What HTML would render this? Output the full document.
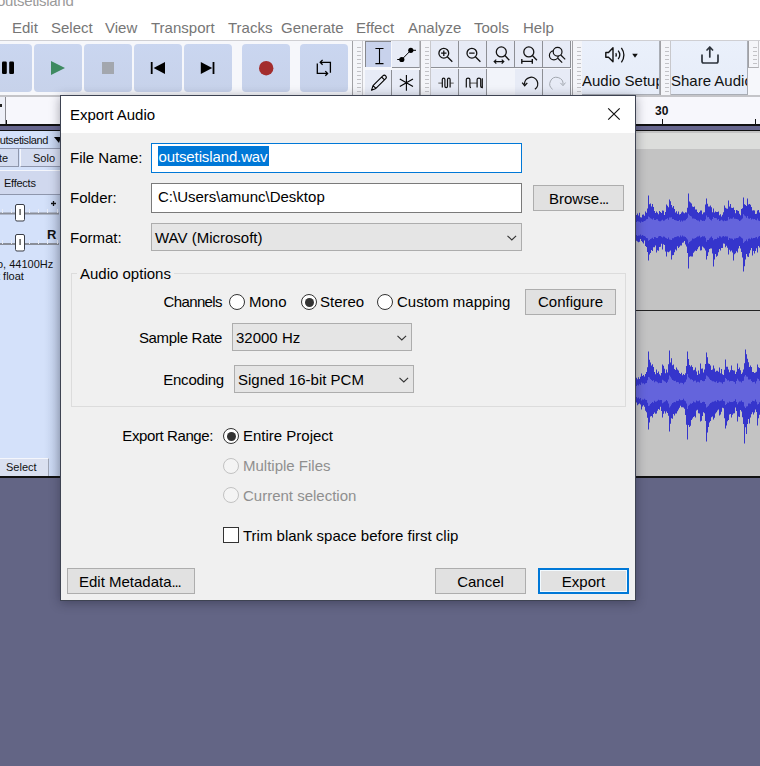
<!DOCTYPE html>
<html><head><meta charset="utf-8">
<style>
*{margin:0;padding:0;box-sizing:border-box}
html,body{width:760px;height:766px;overflow:hidden;background:#636585;font-family:"Liberation Sans",sans-serif;font-size:15px;color:#000}
.a{position:absolute}
svg{position:absolute;overflow:visible}
#top{left:0;top:0;width:760px;height:40px;background:#fff}
.menu{top:19px;color:#767676;font-size:15px;line-height:17px;white-space:nowrap}
#tb{left:0;top:40px;width:760px;height:57px;background:#f6f7fb;border-top:1px solid #cfcfd3;border-bottom:2px solid #c4c4c8}
.tbtn{top:44px;height:48px;background:linear-gradient(#cad6f0,#c7d2ea);border-radius:4px}
.grip{top:41px;height:54px;width:11px;border-left:1px solid #a0a0a4;border-right:1px solid #c8c8cc;background:#f4f5f9}
.grip i{position:absolute;left:4px;width:4px;height:1px;background:#c2c2c6}
.tl{background:#e7ebf6}
#ruler{left:0;top:97px;width:760px;height:27px;background:#f7f7fc}
.lbl{white-space:nowrap;line-height:17px}
.inp{background:#fff;border:1px solid #7a7a7a}
.btn{background:#e1e1e1;border:1px solid #adadad;text-align:center;line-height:24px;white-space:nowrap}
.combo{background:#e5e5e5;border:1px solid #adadad;line-height:26px;padding-left:4px;white-space:nowrap}
.radio{width:16px;height:16px;border-radius:50%;border:1px solid #333;background:#fff}
.tp{font-size:11px;line-height:13px;white-space:nowrap;color:#111}
</style></head><body>
<div id="top" class="a">
  <div class="a" style="left:-3px;top:-8px;color:#9a9a9a;font-size:15px;line-height:17px;letter-spacing:-0.3px">outsetisland</div>
  <div class="a menu" style="left:12px">Edit</div>
  <div class="a menu" style="left:51px">Select</div>
  <div class="a menu" style="left:105px">View</div>
  <div class="a menu" style="left:151px">Transport</div>
  <div class="a menu" style="left:228px">Tracks</div>
  <div class="a menu" style="left:281px">Generate</div>
  <div class="a menu" style="left:356px">Effect</div>
  <div class="a menu" style="left:408px">Analyze</div>
  <div class="a menu" style="left:474px">Tools</div>
  <div class="a menu" style="left:523px">Help</div>
</div>
<div id="tb" class="a"></div>
<!-- transport buttons -->
<div class="a tbtn" style="left:-16px;width:48px"></div>
<div class="a tbtn" style="left:34px;width:48px"></div>
<div class="a tbtn" style="left:84px;width:48px"></div>
<div class="a tbtn" style="left:134px;width:48px"></div>
<div class="a tbtn" style="left:184px;width:48px"></div>
<div class="a tbtn" style="left:242px;width:48px"></div>
<div class="a tbtn" style="left:300px;width:48px"></div>
<svg width="760" height="100" style="left:0;top:0">
  <rect x="2" y="61.5" width="4.8" height="12.5" rx="1.2" fill="#000"/>
  <rect x="9.2" y="61.5" width="4.8" height="12.5" rx="1.2" fill="#000"/>
  <path d="M51 61 L65 68 L51 75Z" fill="#3e8a61"/>
  <rect x="102" y="62" width="12" height="12" fill="#a3a7ae"/>
  <rect x="150.8" y="62" width="1.8" height="12" fill="#000"/>
  <path d="M165 62 L153.6 68 L165 74Z" fill="#000"/>
  <path d="M200.8 62 L212.2 68 L200.8 74Z" fill="#000"/>
  <rect x="212.6" y="62" width="1.8" height="12" fill="#000"/>
  <circle cx="266.2" cy="68.2" r="7.2" fill="#a32d2d"/>
  <path d="M322.6 59.9 L320.2 62.3 L322.6 64.7 M320.3 62.3 H330.4 V72.8 M317.3 63.5 V73.4 H327.6 M325.3 71.1 L327.6 73.4 L325.3 75.7" fill="none" stroke="#000" stroke-width="1.3"/>
</svg>
<!-- grips -->
<div class="a grip" style="left:352px"><i style="top:6px"></i><i style="top:10px"></i><i style="top:14px"></i><i style="top:18px"></i><i style="top:22px"></i><i style="top:26px"></i><i style="top:30px"></i><i style="top:34px"></i><i style="top:38px"></i><i style="top:42px"></i><i style="top:46px"></i><i style="top:50px"></i></div>
<div class="a grip" style="left:420px"><i style="top:6px"></i><i style="top:10px"></i><i style="top:14px"></i><i style="top:18px"></i><i style="top:22px"></i><i style="top:26px"></i><i style="top:30px"></i><i style="top:34px"></i><i style="top:38px"></i><i style="top:42px"></i><i style="top:46px"></i><i style="top:50px"></i></div>
<div class="a grip" style="left:572px"><i style="top:6px"></i><i style="top:10px"></i><i style="top:14px"></i><i style="top:18px"></i><i style="top:22px"></i><i style="top:26px"></i><i style="top:30px"></i><i style="top:34px"></i><i style="top:38px"></i><i style="top:42px"></i><i style="top:46px"></i><i style="top:50px"></i></div>
<div class="a grip" style="left:660px"><i style="top:6px"></i><i style="top:10px"></i><i style="top:14px"></i><i style="top:18px"></i><i style="top:22px"></i><i style="top:26px"></i><i style="top:30px"></i><i style="top:34px"></i><i style="top:38px"></i><i style="top:42px"></i><i style="top:46px"></i><i style="top:50px"></i></div>
<div class="a grip" style="left:748px;height:27px;border-bottom:1px solid #b0b0b4"><i style="top:6px"></i><i style="top:10px"></i><i style="top:14px"></i><i style="top:18px"></i><i style="top:22px"></i></div>
<!-- tools -->
<div class="a" style="left:365px;top:41px;width:26px;height:26px;background:#c8d2ec;border-top:1px solid #85878d;border-left:1px solid #85878d"></div>
<div class="a tl" style="left:392px;top:41px;width:28px;height:27px;border-bottom:1px solid #8d8f95;border-right:1px solid #c0c2c8"></div>
<div class="a tl" style="left:365px;top:70px;width:27px;height:25px;border-right:1px solid #8d8f95"></div>
<div class="a tl" style="left:392px;top:70px;width:28px;height:25px;border-right:1px solid #8d8f95"></div>
<svg width="760" height="100" style="left:0;top:0">
  <path d="M375.4 48.5 H383.5 M379.5 48.5 V63.6 M375.4 63.6 H383.5" stroke="#000" stroke-width="1.1" fill="none"/>
  <path d="M397.2 59.5 H401.8 L410.8 50.3 H416" stroke="#000" stroke-width="1" fill="none"/>
  <circle cx="401.8" cy="59.5" r="2.6" fill="#000"/><circle cx="410.8" cy="50.3" r="2.6" fill="#000"/>
  <path d="M371.5 90.3 L373 85.6 L382.8 75.8 Q384.3 74.4 385.7 75.8 Q387.1 77.2 385.7 78.6 L375.9 88.4 Z M373 85.6 L375.9 88.4 M381.6 77 L384.5 79.8" stroke="#000" stroke-width="1.1" fill="none" stroke-linejoin="round"/>
  <path d="M406.4 75 V90.8 M399.8 78.9 L413 86.5 M399.8 86.5 L413 78.9" stroke="#000" stroke-width="1.1" fill="none"/>
</svg>
<!-- zoom tools -->
<div class="a tl" style="left:431px;top:41px;width:28px;height:27px;border-right:1px solid #8d8f95;border-bottom:1px solid #8d8f95"></div>
<div class="a tl" style="left:459px;top:41px;width:28px;height:27px;border-right:1px solid #8d8f95;border-bottom:1px solid #8d8f95"></div>
<div class="a tl" style="left:487px;top:41px;width:28px;height:27px;border-right:1px solid #8d8f95;border-bottom:1px solid #8d8f95"></div>
<div class="a tl" style="left:515px;top:41px;width:28px;height:27px;border-right:1px solid #8d8f95;border-bottom:1px solid #8d8f95"></div>
<div class="a tl" style="left:543px;top:41px;width:28px;height:27px;border-right:1px solid #8d8f95;border-bottom:1px solid #8d8f95"></div>
<div class="a tl" style="left:431px;top:69px;width:28px;height:26px;border-right:1px solid #8d8f95"></div>
<div class="a tl" style="left:459px;top:69px;width:28px;height:26px;border-right:1px solid #8d8f95"></div>
<div class="a" style="left:487px;top:69px;width:28px;height:26px;background:#f2f4fa"></div>
<div class="a tl" style="left:515px;top:69px;width:28px;height:26px;border-right:1px solid #8d8f95"></div>
<div class="a tl" style="left:543px;top:69px;width:28px;height:26px;border-right:1px solid #8d8f95"></div>
<svg width="760" height="100" style="left:0;top:0">
  <g stroke="#111" stroke-width="1.3" fill="none">
    <circle cx="443.8" cy="53.2" r="4.9"/><path d="M447.3 56.7 L452.3 61.7 M441.1 53.2 H446.5 M443.8 50.5 V55.9"/>
    <circle cx="471.9" cy="53.2" r="4.9"/><path d="M475.4 56.7 L480.4 61.7 M469.2 53.2 H474.6"/>
    <circle cx="501.3" cy="51.9" r="5"/><path d="M504.9 55.5 L509.3 60.2"/>
    <path d="M494 61.6 H504 M496.3 59.6 L494.2 61.6 L496.3 63.6 M501.7 59.6 L503.8 61.6 L501.7 63.6" stroke-width="1.2"/>
    <circle cx="528.8" cy="51.9" r="5"/><path d="M532.4 55.5 L536.9 60.2"/>
    <path d="M521.5 61.4 H532.6 M521.8 59 V63.8 M532.3 59 V63.8" stroke-width="1.4"/>
    <circle cx="553.9" cy="55.3" r="4.5" stroke-width="1.2"/><circle cx="557.6" cy="51.7" r="4.4" fill="#e7ebf6" stroke-width="1.2"/><path d="M560.8 55 L565.2 59.4 M557.8 58.3 L562.2 62.6" stroke-width="1.2"/>
    <path d="M438.3 83.1 H442.3 M450.3 83.1 H453.7" stroke="#777" stroke-width="1.3"/>
    <path d="M442.3 87.6 V79.6 Q442.3 78.2 443.6 78.2 Q444.9 78.2 444.9 79.6 V86.3 Q444.9 87.6 446.2 87.6 Q447.5 87.6 447.5 86.3 V79.6 Q447.5 78.2 448.8 78.2 Q450.1 78.2 450.1 79.6 V87.6" stroke-width="1.2"/>
    <path d="M469.9 83.1 H477.1" stroke="#777" stroke-width="1.3"/>
    <path d="M466.3 87.6 V79.6 Q466.3 78.2 468.1 78.2 Q469.9 78.2 469.9 79.6 V86.3 Q469.9 87.6 471 87.6 M477.1 79.6 Q477.1 78.2 478.9 78.2 Q480.7 78.2 480.7 79.6 V86.3 Q480.7 87.6 482.3 87.6 V78.2 M477.1 79.6 V87.6" stroke-width="1.2"/>
    <path d="M534.9 89.3 A6.6 6.6 0 1 0 524.6 84.6" stroke-width="1.3"/>
    <path d="M522.2 82.6 L524.7 85.7 L527.3 82.9" stroke-width="1.3"/>
    <path d="M552.6 89.3 A6.6 6.6 0 1 1 563 84.6" stroke="#a3a8b0" stroke-width="1"/>
    <path d="M560.4 82.9 L563 85.7 L565.5 82.6" stroke="#a3a8b0" stroke-width="1"/>
  </g>
</svg>
<!-- audio setup / share -->
<div class="a" style="left:582px;top:41px;width:78px;height:54px;background:linear-gradient(#eaf0fb,#e6ecf8);border-right:1px solid #a9adb5;border-bottom:1px solid #a9adb5"></div>
<div class="a" style="left:671px;top:41px;width:77px;height:54px;background:linear-gradient(#eaf0fb,#e6ecf8);border-right:1px solid #a9adb5;border-bottom:1px solid #a9adb5"></div>
<div class="a lbl" style="left:582px;top:72px;width:77px;overflow:hidden;font-size:15px;color:#111">Audio Setup</div>
<div class="a lbl" style="left:671px;top:72px;width:76px;overflow:hidden;font-size:15px;color:#111">Share Audio</div>
<svg width="760" height="100" style="left:0;top:0">
  <path d="M605.8 52.5 H608.5 L613 47.8 V61.8 L608.5 57.3 H605.8 Z" stroke="#111" stroke-width="1.4" fill="none" stroke-linejoin="round"/>
  <path d="M615.8 53.2 Q616.8 54.9 615.8 56.6 M618.2 50.7 Q621.4 54.9 618.2 59.1 M621.4 47.8 Q626.4 54.9 621.4 62.4" stroke="#111" stroke-width="1.3" fill="none"/>
  <path d="M632.2 53.8 H637.8 L635 57.8Z" fill="#111"/>
  <path d="M709.8 57 V47.3 M707 50 L709.8 47 L712.6 50 M702 55.2 V61.3 Q702 63 703.7 63 H716.3 Q718 63 718 61.3 V55.2" stroke="#2d333c" stroke-width="1.7" fill="none" stroke-linecap="round" stroke-linejoin="round"/>
</svg>

<!-- ruler -->
<div id="ruler" class="a"></div>
<div class="a" style="left:0;top:97px;width:6px;height:27px;background:#eef0f8;border-right:1px solid #8a8a90"></div>
<div class="a" style="left:0;top:104px;width:2px;height:3px;background:#222"></div>
<div class="a" style="left:6px;top:120px;width:1px;height:4px;background:#111"></div>
<div class="a tp" style="left:655px;top:104px;font-size:12px;font-weight:bold;line-height:14px">30</div>
<div class="a" style="left:662px;top:119px;width:1px;height:5px;background:#111"></div>
<div class="a" style="left:755px;top:119px;width:1px;height:5px;background:#111"></div>
<!-- top dark band -->
<div class="a" style="left:0;top:124px;width:760px;height:7px;background:#66668e;border-top:2px solid #111;border-bottom:1px solid #111"></div>
<div class="a" style="left:636px;top:131px;width:124px;height:1px;background:#e6e6e6"></div>
<div class="a" style="left:636px;top:132px;width:124px;height:1px;background:#111"></div>

<!-- track panel -->
<div class="a" style="left:0;top:131px;width:61px;height:345px;background:linear-gradient(90deg,#d4e1fa 0,#d4e1fa 72%,#bccae4 100%)"></div>
<div class="a tp" style="left:-6px;top:134px;font-size:11px;letter-spacing:-0.4px">outsetisland</div>
<svg width="70" height="200" style="left:0;top:0"><path d="M54 137 H61 L59 143Z" fill="#000"/></svg>
<div class="a" style="left:0;top:148px;width:61px;height:1px;background:#8e96ac"></div>
<div class="a" style="left:-20px;top:149px;width:39px;height:18px;background:#d4dcf0;border-right:1px solid #8e96ac;border-bottom:1px solid #8e96ac"></div>
<div class="a tp" style="left:-1px;top:152px">te</div>
<div class="a" style="left:20px;top:149px;width:41px;height:18px;background:#d4dcf0;border-bottom:1px solid #8e96ac;border-left:1px solid #f4f6fc"></div>
<div class="a tp" style="left:33px;top:152px">Solo</div>
<div class="a" style="left:0;top:170px;width:61px;height:1px;background:#f4f6fc"></div>
<div class="a" style="left:0;top:171px;width:61px;height:24px;background:#d0d8ee;border-bottom:1px solid #8e96ac"></div>
<div class="a tp" style="left:4px;top:177px;letter-spacing:-0.25px">Effects</div>
<!-- gain slider -->
<svg width="70" height="300" style="left:0;top:0">
  <rect x="0" y="212.5" width="59" height="2" fill="#8a8e98"/>
  <g fill="#e8ecf6"><rect x="2" y="209" width="1" height="4"/><rect x="11" y="209" width="1" height="4"/><rect x="29" y="209" width="1" height="4"/><rect x="38" y="209" width="1" height="4"/><rect x="47" y="209" width="1" height="4"/><rect x="57" y="209" width="1" height="4"/></g>
  <rect x="15.5" y="204.5" width="9" height="16.5" rx="1.5" fill="#fff" stroke="#3a3e48" stroke-width="1"/>
  <rect x="19.3" y="209" width="1.6" height="6" fill="#666"/>
  <path d="M51 203.5 H56 M53.5 201 V206" stroke="#111" stroke-width="1.3"/>
  <rect x="0" y="243" width="59" height="2" fill="#8a8e98"/>
  <g fill="#e8ecf6"><rect x="2" y="240" width="1" height="4"/><rect x="11" y="240" width="1" height="4"/><rect x="29" y="240" width="1" height="4"/><rect x="38" y="240" width="1" height="4"/><rect x="47" y="240" width="1" height="4"/><rect x="57" y="240" width="1" height="4"/></g>
  <rect x="15.5" y="234.5" width="9" height="16.5" rx="1.5" fill="#fff" stroke="#3a3e48" stroke-width="1"/>
  <rect x="19.3" y="239" width="1.6" height="6" fill="#666"/>
</svg>
<div class="a tp" style="left:47px;top:228px;font-size:13px;font-weight:bold;line-height:13px">R</div>
<div class="a tp" style="left:-3px;top:258px">o, 44100Hz</div>
<div class="a tp" style="left:-3px;top:270px">t float</div>
<div class="a" style="left:-10px;top:458px;width:59px;height:18px;background:#dae0f0;border-right:1px solid #9ea4b4;border-top:1px solid #f4f6fc"></div>
<div class="a tp" style="left:6px;top:461px">Select</div>

<!-- waveform area -->
<div class="a" style="left:636px;top:131px;width:124px;height:345px;background:#c3c3c3"></div>
<div class="a" style="left:636px;top:133px;width:124px;height:16px;background:#dcdddb"></div>
<div class="a" style="left:636px;top:310px;width:124px;height:1px;background:#222"></div>
<svg width="760" height="766" style="left:0;top:0"><path d="M636 214.9L637 214.9L637 213.6L638 213.6L638 215.6L639 215.6L639 212.8L640 212.8L640 217.3L641 217.3L641 217.4L642 217.4L642 214.7L643 214.7L643 214.6L644 214.6L644 215.8L645 215.8L645 211.6L646 211.6L646 212.8L647 212.8L647 208.5L648 208.5L648 195.6L649 195.6L649 204.3L650 204.3L650 203.4L651 203.4L651 206.4L652 206.4L652 204.0L653 204.0L653 206.9L654 206.9L654 211.1L655 211.1L655 213.0L656 213.0L656 211.6L657 211.6L657 212.8L658 212.8L658 214.3L659 214.3L659 210.9L660 210.9L660 211.9L661 211.9L661 212.9L662 212.9L662 210.6L663 210.6L663 210.7L664 210.7L664 214.9L665 214.9L665 212.0L666 212.0L666 204.6L667 204.6L667 205.8L668 205.8L668 207.2L669 207.2L669 199.6L670 199.6L670 201.2L671 201.2L671 205.0L672 205.0L672 207.6L673 207.6L673 206.1L674 206.1L674 208.9L675 208.9L675 212.4L676 212.4L676 211.2L677 211.2L677 213.8L678 213.8L678 211.6L679 211.6L679 214.5L680 214.5L680 213.9L681 213.9L681 212.6L682 212.6L682 211.6L683 211.6L683 212.6L684 212.6L684 213.3L685 213.3L685 212.3L686 212.3L686 212.6L687 212.6L687 207.8L688 207.8L688 193.6L689 193.6L689 201.5L690 201.5L690 202.6L691 202.6L691 203.6L692 203.6L692 206.4L693 206.4L693 207.0L694 207.0L694 206.4L695 206.4L695 209.4L696 209.4L696 209.4L697 209.4L697 211.9L698 211.9L698 213.0L699 213.0L699 211.9L700 211.9L700 210.6L701 210.6L701 210.5L702 210.5L702 214.2L703 214.2L703 212.5L704 212.5L704 212.2L705 212.2L705 204.6L706 204.6L706 198.6L707 198.6L707 203.8L708 203.8L708 206.6L709 206.6L709 206.6L710 206.6L710 205.6L711 205.6L711 207.2L712 207.2L712 212.2L713 212.2L713 208.6L714 208.6L714 212.6L715 212.6L715 211.6L716 211.6L716 212.0L717 212.0L717 212.1L718 212.1L718 211.6L719 211.6L719 215.3L720 215.3L720 214.3L721 214.3L721 216.5L722 216.5L722 214.7L723 214.7L723 212.3L724 212.3L724 205.6L725 205.6L725 207.8L726 207.8L726 208.6L727 208.6L727 208.7L728 208.7L728 200.6L729 200.6L729 206.6L730 206.6L730 203.9L731 203.9L731 207.8L732 207.8L732 207.9L733 207.9L733 207.6L734 207.6L734 210.0L735 210.0L735 213.2L736 213.2L736 210.1L737 210.1L737 210.6L738 210.6L738 210.9L739 210.9L739 213.7L740 213.7L740 215.3L741 215.3L741 209.0L742 209.0L742 208.2L743 208.2L743 197.6L744 197.6L744 204.2L745 204.2L745 204.9L746 204.9L746 206.1L747 206.1L747 198.6L748 198.6L748 204.4L749 204.4L749 204.1L750 204.1L750 204.8L751 204.8L751 206.9L752 206.9L752 210.6L753 210.6L753 210.2L754 210.2L754 210.6L755 210.6L755 214.1L756 214.1L756 213.8L757 213.8L757 210.6L758 210.6L758 210.0L759 210.0L759 212.4L760 212.4L760 213.0L761 213.0L761 247.8L760 247.8L760 247.4L759 247.4L759 246.1L758 246.1L758 252.6L757 252.6L757 248.3L756 248.3L756 251.0L755 251.0L755 253.5L754 253.5L754 251.1L753 251.1L753 255.6L752 255.6L752 248.1L751 248.1L751 250.3L750 250.3L750 253.3L749 253.3L749 256.9L748 256.9L748 256.6L747 256.6L747 254.1L746 254.1L746 259.5L745 259.5L745 266.2L744 266.2L744 271.6L743 271.6L743 257.5L742 257.5L742 251.9L741 251.9L741 248.4L740 248.4L740 245.9L739 245.9L739 248.5L738 248.5L738 252.6L737 252.6L737 251.3L736 251.3L736 253.2L735 253.2L735 254.3L734 254.3L734 260.6L733 260.6L733 252.5L732 252.5L732 250.4L731 250.4L731 251.6L730 251.6L730 249.8L729 249.8L729 254.6L728 254.6L728 247.8L727 247.8L727 245.8L726 245.8L726 247.2L725 247.2L725 243.8L724 243.8L724 243.5L723 243.5L723 248.0L722 248.0L722 248.0L721 248.0L721 250.6L720 250.6L720 249.1L719 249.1L719 252.3L718 252.3L718 255.7L717 255.7L717 256.8L716 256.8L716 253.9L715 253.9L715 259.6L714 259.6L714 266.6L713 266.6L713 253.4L712 253.4L712 248.6L711 248.6L711 248.6L710 248.6L710 249.1L709 249.1L709 252.3L708 252.3L708 256.1L707 256.1L707 259.6L706 259.6L706 250.4L705 250.4L705 248.5L704 248.5L704 247.6L703 247.6L703 246.4L702 246.4L702 250.3L701 250.3L701 250.6L700 250.6L700 246.2L699 246.2L699 247.2L698 247.2L698 249.2L697 249.2L697 251.0L696 251.0L696 250.4L695 250.4L695 251.4L694 251.4L694 252.7L693 252.7L693 256.4L692 256.4L692 256.5L691 256.5L691 256.3L690 256.3L690 256.8L689 256.8L689 268.6L688 268.6L688 253.0L687 253.0L687 246.4L686 246.4L686 244.6L685 244.6L685 240.9L684 240.9L684 242.5L683 242.5L683 242.7L682 242.7L682 245.6L681 245.6L681 245.6L680 245.6L680 246.8L679 246.8L679 247.9L678 247.9L678 246.2L677 246.2L677 250.4L676 250.4L676 249.6L675 249.6L675 252.2L674 252.2L674 255.0L673 255.0L673 255.3L672 255.3L672 259.6L671 259.6L671 250.4L670 250.4L670 251.4L669 251.4L669 252.3L668 252.3L668 251.8L667 251.8L667 256.6L666 256.6L666 251.6L665 251.6L665 245.1L664 245.1L664 244.3L663 244.3L663 249.6L662 249.6L662 243.7L661 243.7L661 246.7L660 246.7L660 246.9L659 246.9L659 250.7L658 250.7L658 250.2L657 250.2L657 252.6L656 252.6L656 245.6L655 245.6L655 247.3L654 247.3L654 247.2L653 247.2L653 251.1L652 251.1L652 249.9L651 249.9L651 253.0L650 253.0L650 254.5L649 254.5L649 260.6L648 260.6L648 252.1L647 252.1L647 247.0L646 247.0L646 246.0L645 246.0L645 240.6L644 240.6L644 243.6L643 243.6L643 242.2L642 242.2L642 240.9L641 240.9L641 239.1L640 239.1L640 241.7L639 241.7L639 242.3L638 242.3L638 241.5L637 241.5L637 240.7L636 240.7Z" fill="#3535cc"/><path d="M636 222.1L637 222.1L637 221.3L638 221.3L638 221.6L639 221.6L639 221.8L640 221.8L640 222.7L641 222.7L641 221.4L642 221.4L642 222.1L643 222.1L643 221.5L644 221.5L644 221.1L645 221.1L645 220.4L646 220.4L646 219.2L647 219.2L647 219.0L648 219.0L648 216.5L649 216.5L649 217.3L650 217.3L650 218.2L651 218.2L651 218.7L652 218.7L652 219.4L653 219.4L653 218.3L654 218.3L654 220.1L655 220.1L655 219.9L656 219.9L656 219.3L657 219.3L657 219.2L658 219.2L658 220.8L659 220.8L659 221.3L660 221.3L660 221.3L661 221.3L661 220.5L662 220.5L662 219.8L663 219.8L663 220.8L664 220.8L664 220.5L665 220.5L665 219.5L666 219.5L666 218.9L667 218.9L667 218.3L668 218.3L668 219.8L669 219.8L669 217.6L670 217.6L670 217.5L671 217.5L671 217.2L672 217.2L672 218.9L673 218.9L673 218.9L674 218.9L674 220.0L675 220.0L675 220.2L676 220.2L676 220.5L677 220.5L677 221.0L678 221.0L678 221.0L679 221.0L679 220.0L680 220.0L680 221.8L681 221.8L681 220.4L682 220.4L682 221.6L683 221.6L683 220.6L684 220.6L684 220.6L685 220.6L685 220.2L686 220.2L686 219.0L687 219.0L687 217.7L688 217.7L688 213.7L689 213.7L689 215.3L690 215.3L690 215.9L691 215.9L691 216.6L692 216.6L692 218.6L693 218.6L693 218.4L694 218.4L694 218.8L695 218.8L695 219.1L696 219.1L696 219.9L697 219.9L697 220.6L698 220.6L698 220.6L699 220.6L699 221.4L700 221.4L700 219.8L701 219.8L701 220.2L702 220.2L702 221.0L703 221.0L703 220.7L704 220.7L704 221.0L705 221.0L705 219.5L706 219.5L706 215.5L707 215.5L707 217.3L708 217.3L708 217.1L709 217.1L709 218.7L710 218.7L710 219.8L711 219.8L711 220.6L712 220.6L712 219.1L713 219.1L713 216.9L714 216.9L714 217.9L715 217.9L715 218.1L716 218.1L716 218.2L717 218.2L717 219.8L718 219.8L718 219.1L719 219.1L719 221.0L720 221.0L720 220.6L721 220.6L721 219.8L722 219.8L722 220.6L723 220.6L723 221.3L724 221.3L724 220.4L725 220.4L725 220.9L726 220.9L726 220.7L727 220.7L727 220.6L728 220.6L728 217.1L729 217.1L729 219.2L730 219.2L730 218.6L731 218.6L731 218.7L732 218.7L732 218.5L733 218.5L733 217.2L734 217.2L734 218.7L735 218.7L735 218.7L736 218.7L736 219.1L737 219.1L737 219.3L738 219.3L738 219.7L739 219.7L739 220.9L740 220.9L740 220.5L741 220.5L741 219.4L742 219.4L742 218.6L743 218.6L743 214.3L744 214.3L744 215.4L745 215.4L745 216.3L746 216.3L746 217.8L747 217.8L747 215.9L748 215.9L748 218.4L749 218.4L749 218.7L750 218.7L750 217.9L751 217.9L751 219.4L752 219.4L752 218.7L753 218.7L753 219.3L754 219.3L754 219.1L755 219.1L755 219.7L756 219.7L756 220.2L757 220.2L757 218.6L758 218.6L758 220.4L759 220.4L759 221.1L760 221.1L760 220.8L761 220.8L761 236.4L760 236.4L760 236.1L759 236.1L759 236.8L758 236.8L758 238.6L757 238.6L757 237.0L756 237.0L756 237.5L755 237.5L755 238.1L754 238.1L754 237.9L753 237.9L753 238.5L752 238.5L752 237.8L751 237.8L751 239.3L750 239.3L750 238.5L749 238.5L749 238.8L748 238.8L748 241.3L747 241.3L747 239.4L746 239.4L746 240.9L745 240.9L745 241.8L744 241.8L744 242.9L743 242.9L743 238.6L742 238.6L742 237.8L741 237.8L741 236.7L740 236.7L740 236.3L739 236.3L739 237.5L738 237.5L738 237.9L737 237.9L737 238.1L736 238.1L736 238.5L735 238.5L735 238.5L734 238.5L734 240.0L733 240.0L733 238.7L732 238.7L732 238.5L731 238.5L731 238.6L730 238.6L730 238.0L729 238.0L729 240.1L728 240.1L728 236.6L727 236.6L727 236.5L726 236.5L726 236.3L725 236.3L725 236.8L724 236.8L724 235.9L723 235.9L723 236.6L722 236.6L722 237.4L721 237.4L721 236.6L720 236.6L720 236.2L719 236.2L719 238.1L718 238.1L718 237.4L717 237.4L717 239.0L716 239.0L716 239.1L715 239.1L715 239.3L714 239.3L714 240.3L713 240.3L713 238.1L712 238.1L712 236.6L711 236.6L711 237.4L710 237.4L710 238.5L709 238.5L709 240.1L708 240.1L708 239.9L707 239.9L707 241.7L706 241.7L706 237.7L705 237.7L705 236.2L704 236.2L704 236.5L703 236.5L703 236.2L702 236.2L702 237.0L701 237.0L701 237.4L700 237.4L700 235.8L699 235.8L699 236.6L698 236.6L698 236.6L697 236.6L697 237.3L696 237.3L696 238.1L695 238.1L695 238.4L694 238.4L694 238.8L693 238.8L693 238.6L692 238.6L692 240.6L691 240.6L691 241.3L690 241.3L690 241.9L689 241.9L689 243.5L688 243.5L688 239.5L687 239.5L687 238.2L686 238.2L686 237.0L685 237.0L685 236.6L684 236.6L684 236.6L683 236.6L683 235.6L682 235.6L682 236.8L681 236.8L681 235.4L680 235.4L680 237.2L679 237.2L679 236.2L678 236.2L678 236.2L677 236.2L677 236.7L676 236.7L676 237.0L675 237.0L675 237.2L674 237.2L674 238.3L673 238.3L673 238.3L672 238.3L672 240.0L671 240.0L671 239.7L670 239.7L670 239.6L669 239.6L669 237.4L668 237.4L668 238.9L667 238.9L667 238.3L666 238.3L666 237.7L665 237.7L665 236.7L664 236.7L664 236.4L663 236.4L663 237.4L662 237.4L662 236.7L661 236.7L661 235.9L660 235.9L660 235.9L659 235.9L659 236.4L658 236.4L658 238.0L657 238.0L657 237.9L656 237.9L656 237.3L655 237.3L655 237.1L654 237.1L654 238.9L653 238.9L653 237.8L652 237.8L652 238.5L651 238.5L651 239.0L650 239.0L650 239.9L649 239.9L649 240.7L648 240.7L648 238.2L647 238.2L647 238.0L646 238.0L646 236.8L645 236.8L645 236.1L644 236.1L644 235.7L643 235.7L643 235.1L642 235.1L642 235.8L641 235.8L641 234.5L640 234.5L640 235.4L639 235.4L639 235.6L638 235.6L638 235.9L637 235.9L637 235.1L636 235.1Z" fill="#6464dc"/>
<path d="M636 377.8L637 377.8L637 379.3L638 379.3L638 377.2L639 377.2L639 379.1L640 379.1L640 376.8L641 376.8L641 373.5L642 373.5L642 375.9L643 375.9L643 375.0L644 375.0L644 376.5L645 376.5L645 374.0L646 374.0L646 372.1L647 372.1L647 367.2L648 367.2L648 351.5L649 351.5L649 359.8L650 359.8L650 362.6L651 362.6L651 365.5L652 365.5L652 364.2L653 364.2L653 367.1L654 367.1L654 372.0L655 372.0L655 374.2L656 374.2L656 369.5L657 369.5L657 373.0L658 373.0L658 371.5L659 371.5L659 374.3L660 374.3L660 375.6L661 375.6L661 373.1L662 373.1L662 364.5L663 364.5L663 365.7L664 365.7L664 368.7L665 368.7L665 373.2L666 373.2L666 369.6L667 369.6L667 372.5L668 372.5L668 364.2L669 364.2L669 350.5L670 350.5L670 362.4L671 362.4L671 358.2L672 358.2L672 365.3L673 365.3L673 364.5L674 364.5L674 369.0L675 369.0L675 370.1L676 370.1L676 367.5L677 367.5L677 369.4L678 369.4L678 370.5L679 370.5L679 373.1L680 373.1L680 373.9L681 373.9L681 372.7L682 372.7L682 375.3L683 375.3L683 374.1L684 374.1L684 375.0L685 375.0L685 373.3L686 373.3L686 365.9L687 365.9L687 351.5L688 351.5L688 359.0L689 359.0L689 365.0L690 365.0L690 366.5L691 366.5L691 365.3L692 365.3L692 366.9L693 366.9L693 370.2L694 370.2L694 369.8L695 369.8L695 367.5L696 367.5L696 371.4L697 371.4L697 375.0L698 375.0L698 370.5L699 370.5L699 373.7L700 373.7L700 363.5L701 363.5L701 368.7L702 368.7L702 368.5L703 368.5L703 372.4L704 372.4L704 369.5L705 369.5L705 363.9L706 363.9L706 352.5L707 352.5L707 357.3L708 357.3L708 363.4L709 363.4L709 363.9L710 363.9L710 365.5L711 365.5L711 370.1L712 370.1L712 369.5L713 369.5L713 365.5L714 365.5L714 368.5L715 368.5L715 371.7L716 371.7L716 370.8L717 370.8L717 370.8L718 370.8L718 371.8L719 371.8L719 367.5L720 367.5L720 373.3L721 373.3L721 368.9L722 368.9L722 374.2L723 374.2L723 374.9L724 374.9L724 369.8L725 369.8L725 359.5L726 359.5L726 366.7L727 366.7L727 366.7L728 366.7L728 369.5L729 369.5L729 372.3L730 372.3L730 370.3L731 370.3L731 365.5L732 365.5L732 370.1L733 370.1L733 370.5L734 370.5L734 370.4L735 370.4L735 373.9L736 373.9L736 371.8L737 371.8L737 363.5L738 363.5L738 369.1L739 369.1L739 367.5L740 367.5L740 370.2L741 370.2L741 373.9L742 373.9L742 372.5L743 372.5L743 369.4L744 369.4L744 363.3L745 363.3L745 349.5L746 349.5L746 354.3L747 354.3L747 358.8L748 358.8L748 362.3L749 362.3L749 367.1L750 367.1L750 365.5L751 365.5L751 366.9L752 366.9L752 372.0L753 372.0L753 371.9L754 371.9L754 373.1L755 373.1L755 372.5L756 372.5L756 371.8L757 371.8L757 364.5L758 364.5L758 367.2L759 367.2L759 368.1L760 368.1L760 370.2L761 370.2L761 412.6L760 412.6L760 414.8L759 414.8L759 418.3L758 418.3L758 425.5L757 425.5L757 412.0L756 412.0L756 409.5L755 409.5L755 412.4L754 412.4L754 414.4L753 414.4L753 412.3L752 412.3L752 414.2L751 414.2L751 417.5L750 417.5L750 423.5L749 423.5L749 419.1L748 419.1L748 424.1L747 424.1L747 434.0L746 434.0L746 427.3L745 427.3L745 443.5L744 443.5L744 424.0L743 424.0L743 417.2L742 417.2L742 411.5L741 411.5L741 410.1L740 410.1L740 417.1L739 417.1L739 416.4L738 416.4L738 421.5L737 421.5L737 411.0L736 411.0L736 407.5L735 407.5L735 413.2L734 413.2L734 413.4L733 413.4L733 414.8L732 414.8L732 417.5L731 417.5L731 413.9L730 413.9L730 414.5L729 414.5L729 420.0L728 420.0L728 421.2L727 421.2L727 425.4L726 425.4L726 428.5L725 428.5L725 418.2L724 418.2L724 408.2L723 408.2L723 407.8L722 407.8L722 411.7L721 411.7L721 414.6L720 414.6L720 415.5L719 415.5L719 409.5L718 409.5L718 410.5L717 410.5L717 412.3L716 412.3L716 413.4L715 413.4L715 417.8L714 417.8L714 419.5L713 419.5L713 416.6L712 416.6L712 417.2L711 417.2L711 421.0L710 421.0L710 422.4L709 422.4L709 427.0L708 427.0L708 432.5L707 432.5L707 441.5L706 441.5L706 421.0L705 421.0L705 413.3L704 413.3L704 412.3L703 412.3L703 416.0L702 416.0L702 420.7L701 420.7L701 421.5L700 421.5L700 413.5L699 413.5L699 413.3L698 413.3L698 409.8L697 409.8L697 410.5L696 410.5L696 417.5L695 417.5L695 416.2L694 416.2L694 416.9L693 416.9L693 418.4L692 418.4L692 420.1L691 420.1L691 425.7L690 425.7L690 426.9L689 426.9L689 425.0L688 425.0L688 439.5L687 439.5L687 424.8L686 424.8L686 415.1L685 415.1L685 408.8L684 408.8L684 407.5L683 407.5L683 407.2L682 407.2L682 407.2L681 407.2L681 405.8L680 405.8L680 407.8L679 407.8L679 409.4L678 409.4L678 411.3L677 411.3L677 413.5L676 413.5L676 413.5L675 413.5L675 415.6L674 415.6L674 413.9L673 413.9L673 418.8L672 418.8L672 418.3L671 418.3L671 423.7L670 423.7L670 431.5L669 431.5L669 415.8L668 415.8L668 413.0L667 413.0L667 411.4L666 411.4L666 413.4L665 413.4L665 411.3L664 411.3L664 413.8L663 413.8L663 417.5L662 417.5L662 410.9L661 410.9L661 406.8L660 406.8L660 409.7L659 409.7L659 409.0L658 409.0L658 410.7L657 410.7L657 413.5L656 413.5L656 413.7L655 413.7L655 412.5L654 412.5L654 414.0L653 414.0L653 417.6L652 417.6L652 416.1L651 416.1L651 416.4L650 416.4L650 422.4L649 422.4L649 429.5L648 429.5L648 417.8L647 417.8L647 412.2L646 412.2L646 410.7L645 410.7L645 406.7L644 406.7L644 405.2L643 405.2L643 406.5L642 406.5L642 409.5L641 409.5L641 404.6L640 404.6L640 403.6L639 403.6L639 404.3L638 404.3L638 405.2L637 405.2L637 402.5L636 402.5Z" fill="#3535cc"/><path d="M636 386.0L637 386.0L637 384.7L638 384.7L638 385.5L639 385.5L639 384.2L640 384.2L640 385.0L641 385.0L641 382.5L642 382.5L642 383.4L643 383.4L643 383.2L644 383.2L644 384.3L645 384.3L645 383.2L646 383.2L646 383.0L647 383.0L647 380.2L648 380.2L648 377.0L649 377.0L649 377.6L650 377.6L650 379.1L651 379.1L651 380.1L652 380.1L652 381.1L653 381.1L653 380.3L654 380.3L654 382.2L655 382.2L655 381.2L656 381.2L656 381.4L657 381.4L657 382.3L658 382.3L658 383.3L659 383.3L659 382.8L660 382.8L660 383.1L661 383.1L661 383.0L662 383.0L662 379.7L663 379.7L663 380.4L664 380.4L664 381.3L665 381.3L665 381.7L666 381.7L666 382.9L667 382.9L667 381.7L668 381.7L668 379.5L669 379.5L669 375.6L670 375.6L670 376.8L671 376.8L671 378.4L672 378.4L672 379.9L673 379.9L673 380.6L674 380.6L674 380.9L675 380.9L675 380.8L676 380.8L676 382.3L677 382.3L677 381.9L678 381.9L678 382.2L679 382.2L679 383.7L680 383.7L680 382.7L681 382.7L681 382.8L682 382.8L682 383.1L683 383.1L683 384.3L684 384.3L684 382.6L685 382.6L685 381.7L686 381.7L686 379.5L687 379.5L687 374.1L688 374.1L688 377.3L689 377.3L689 378.2L690 378.2L690 379.4L691 379.4L691 379.2L692 379.2L692 380.1L693 380.1L693 381.5L694 381.5L694 380.7L695 380.7L695 380.6L696 380.6L696 382.5L697 382.5L697 381.8L698 381.8L698 381.7L699 381.7L699 382.6L700 382.6L700 380.3L701 380.3L701 380.0L702 380.0L702 381.0L703 381.0L703 381.3L704 381.3L704 381.0L705 381.0L705 379.0L706 379.0L706 375.4L707 375.4L707 376.3L708 376.3L708 377.3L709 377.3L709 378.8L710 378.8L710 380.1L711 380.1L711 380.6L712 380.6L712 381.2L713 381.2L713 381.2L714 381.2L714 381.7L715 381.7L715 382.3L716 382.3L716 381.2L717 381.2L717 382.9L718 382.9L718 382.4L719 382.4L719 381.7L720 381.7L720 382.2L721 382.2L721 382.6L722 382.6L722 383.7L723 383.7L723 382.1L724 382.1L724 381.7L725 381.7L725 377.9L726 377.9L726 378.9L727 378.9L727 380.6L728 380.6L728 380.3L729 380.3L729 381.4L730 381.4L730 381.1L731 381.1L731 381.0L732 381.0L732 381.1L733 381.1L733 381.4L734 381.4L734 382.1L735 382.1L735 383.7L736 383.7L736 381.1L737 381.1L737 378.8L738 378.8L738 380.4L739 380.4L739 381.6L740 381.6L740 381.5L741 381.5L741 382.6L742 382.6L742 381.0L743 381.0L743 380.7L744 380.7L744 376.5L745 376.5L745 374.9L746 374.9L746 376.4L747 376.4L747 376.7L748 376.7L748 379.5L749 379.5L749 379.5L750 379.5L750 379.3L751 379.3L751 381.1L752 381.1L752 382.2L753 382.2L753 382.1L754 382.1L754 381.7L755 381.7L755 383.6L756 383.6L756 381.3L757 381.3L757 378.4L758 378.4L758 379.1L759 379.1L759 380.7L760 380.7L760 382.1L761 382.1L761 400.9L760 400.9L760 402.3L759 402.3L759 403.9L758 403.9L758 404.6L757 404.6L757 401.7L756 401.7L756 399.4L755 399.4L755 401.3L754 401.3L754 400.9L753 400.9L753 400.8L752 400.8L752 401.9L751 401.9L751 403.7L750 403.7L750 403.5L749 403.5L749 403.5L748 403.5L748 406.3L747 406.3L747 406.6L746 406.6L746 408.1L745 408.1L745 406.5L744 406.5L744 402.3L743 402.3L743 402.0L742 402.0L742 400.4L741 400.4L741 401.5L740 401.5L740 401.4L739 401.4L739 402.6L738 402.6L738 404.2L737 404.2L737 401.9L736 401.9L736 399.3L735 399.3L735 400.9L734 400.9L734 401.6L733 401.6L733 401.9L732 401.9L732 402.0L731 402.0L731 401.9L730 401.9L730 401.6L729 401.6L729 402.7L728 402.7L728 402.4L727 402.4L727 404.1L726 404.1L726 405.1L725 405.1L725 401.3L724 401.3L724 400.9L723 400.9L723 399.3L722 399.3L722 400.4L721 400.4L721 400.8L720 400.8L720 401.3L719 401.3L719 400.6L718 400.6L718 400.1L717 400.1L717 401.8L716 401.8L716 400.7L715 400.7L715 401.3L714 401.3L714 401.8L713 401.8L713 401.8L712 401.8L712 402.4L711 402.4L711 402.9L710 402.9L710 404.2L709 404.2L709 405.7L708 405.7L708 406.7L707 406.7L707 407.6L706 407.6L706 404.0L705 404.0L705 402.0L704 402.0L704 401.7L703 401.7L703 402.0L702 402.0L702 403.0L701 403.0L701 402.7L700 402.7L700 400.4L699 400.4L699 401.3L698 401.3L698 401.2L697 401.2L697 400.5L696 400.5L696 402.4L695 402.4L695 402.3L694 402.3L694 401.5L693 401.5L693 402.9L692 402.9L692 403.8L691 403.8L691 403.6L690 403.6L690 404.8L689 404.8L689 405.7L688 405.7L688 408.9L687 408.9L687 403.5L686 403.5L686 401.3L685 401.3L685 400.4L684 400.4L684 398.7L683 398.7L683 399.9L682 399.9L682 400.2L681 400.2L681 400.3L680 400.3L680 399.3L679 399.3L679 400.8L678 400.8L678 401.1L677 401.1L677 400.7L676 400.7L676 402.2L675 402.2L675 402.1L674 402.1L674 402.4L673 402.4L673 403.1L672 403.1L672 404.6L671 404.6L671 406.2L670 406.2L670 407.4L669 407.4L669 403.5L668 403.5L668 401.3L667 401.3L667 400.1L666 400.1L666 401.3L665 401.3L665 401.7L664 401.7L664 402.6L663 402.6L663 403.3L662 403.3L662 400.0L661 400.0L661 399.9L660 399.9L660 400.2L659 400.2L659 399.7L658 399.7L658 400.7L657 400.7L657 401.6L656 401.6L656 401.8L655 401.8L655 400.8L654 400.8L654 402.7L653 402.7L653 401.9L652 401.9L652 402.9L651 402.9L651 403.9L650 403.9L650 405.4L649 405.4L649 406.0L648 406.0L648 402.8L647 402.8L647 400.0L646 400.0L646 399.8L645 399.8L645 398.7L644 398.7L644 399.8L643 399.8L643 399.6L642 399.6L642 400.5L641 400.5L641 398.0L640 398.0L640 398.8L639 398.8L639 397.5L638 397.5L638 398.3L637 398.3L637 397.0L636 397.0Z" fill="#6464dc"/>
</svg>
<div class="a" style="left:0;top:476px;width:760px;height:2px;background:#111"></div>

<!-- dialog -->
<div class="a" style="left:60px;top:95px;width:576px;height:506px;background:#f0f0f0;border:1px solid #3e4352;box-shadow:0 2px 10px rgba(20,20,40,.38)">
  <div class="a" style="left:0;top:0;width:574px;height:37px;background:#fff"></div>
  <div class="a lbl" style="left:9px;top:10px">Export Audio</div>
  <svg width="20" height="20" style="left:547px;top:12px"><path d="M0.2 0.4 L11.7 11.6 M11.7 0.4 L0.2 11.6" stroke="#111" stroke-width="1.2"/></svg>
  <div class="a lbl" style="left:9px;top:53px">File Name:</div>
  <div class="a" style="left:90px;top:47px;width:371px;height:30px;background:#fff;border:1px solid #0078d7"></div>
  <div class="a lbl" style="left:97px;top:50px;width:111px;height:20px;background:#0078d7;color:#fff;padding-top:2px;padding-left:0.5px;letter-spacing:-0.12px;line-height:17px">outsetisland.wav</div>
  <div class="a lbl" style="left:9px;top:93px">Folder:</div>
  <div class="a inp" style="left:90px;top:87px;width:371px;height:30px"></div>
  <div class="a lbl" style="left:97px;top:92px">C:\Users\amunc\Desktop</div>
  <div class="a btn" style="left:472px;top:89px;width:91px;height:26px"></div>
  <div class="a lbl" style="left:472px;top:94px;width:91px;text-align:center">Browse<span style="letter-spacing:-1.2px">...</span></div>
  <div class="a lbl" style="left:9px;top:133px">Format:</div>
  <div class="a combo" style="left:90px;top:127px;width:371px;height:28px"></div>
  <div class="a lbl" style="left:94px;top:133px">WAV (Microsoft)</div>
  <svg width="12" height="8" style="left:446px;top:139px"><path d="M0.5 0.8 L4.8 5 L9.1 0.8" stroke="#333" stroke-width="1.1" fill="none"/></svg>
  <div class="a" style="left:10px;top:177px;width:555px;height:134px;border:1px solid #dcdcdc"></div>
  <div class="a lbl" style="left:16px;top:169px;padding:0 3px;background:#f0f0f0">Audio options</div>
  <div class="a lbl" style="left:61px;width:100px;text-align:right;top:197px;letter-spacing:-0.6px">Channels</div>
  <div class="a radio" style="left:168px;top:198px"></div>
  <div class="a lbl" style="left:188px;top:197px">Mono</div>
  <div class="a radio" style="left:240px;top:198px"></div>
  <div class="a" style="left:243.5px;top:201.5px;width:9px;height:9px;border-radius:50%;background:#333"></div>
  <div class="a lbl" style="left:259px;top:197px">Stereo</div>
  <div class="a radio" style="left:316px;top:198px"></div>
  <div class="a lbl" style="left:336px;top:197px">Custom mapping</div>
  <div class="a btn" style="left:464px;top:193px;width:91px;height:26px"></div>
  <div class="a lbl" style="left:464px;top:197px;width:91px;text-align:center">Configure</div>
  <div class="a lbl" style="left:41px;width:120px;text-align:right;top:233px;letter-spacing:-0.33px">Sample Rate</div>
  <div class="a combo" style="left:171px;top:227px;width:180px;height:28px"></div>
  <div class="a lbl" style="left:175px;top:233px">32000 Hz</div>
  <svg width="12" height="8" style="left:335.5px;top:238.7px"><path d="M0.5 0.8 L4.8 5 L9.1 0.8" stroke="#333" stroke-width="1.1" fill="none"/></svg>
  <div class="a lbl" style="left:43px;width:120px;text-align:right;top:275px;letter-spacing:-0.22px">Encoding</div>
  <div class="a combo" style="left:173px;top:269px;width:180px;height:28px"></div>
  <div class="a lbl" style="left:177px;top:275px">Signed 16-bit PCM</div>
  <svg width="12" height="8" style="left:337.5px;top:280.7px"><path d="M0.5 0.8 L4.8 5 L9.1 0.8" stroke="#333" stroke-width="1.1" fill="none"/></svg>
  <div class="a lbl" style="left:32px;width:120px;text-align:right;top:331px;letter-spacing:-0.4px">Export Range:</div>
  <div class="a radio" style="left:162px;top:332px"></div>
  <div class="a" style="left:165.5px;top:335.5px;width:9px;height:9px;border-radius:50%;background:#333"></div>
  <div class="a lbl" style="left:182px;top:331px">Entire Project</div>
  <div class="a radio" style="left:162px;top:362px;border-color:#c2c2c2;background:#f4f4f4"></div>
  <div class="a lbl" style="left:182px;top:361px;color:#8f8f8f">Multiple Files</div>
  <div class="a radio" style="left:162px;top:391px;border-color:#c2c2c2;background:#f4f4f4"></div>
  <div class="a lbl" style="left:182px;top:391px;color:#8f8f8f">Current selection</div>
  <div class="a" style="left:162px;top:431px;width:16px;height:16px;border:1px solid #333;background:#fff"></div>
  <div class="a lbl" style="left:182px;top:431px">Trim blank space before first clip</div>
  <div class="a btn" style="left:6px;top:472px;width:128px;height:26px"></div>
  <div class="a lbl" style="left:18px;top:477px">Edit Metadata<span style="letter-spacing:-1.2px">...</span></div>
  <div class="a btn" style="left:374px;top:472px;width:91px;height:26px"></div>
  <div class="a lbl" style="left:374px;top:477px;width:91px;text-align:center">Cancel</div>
  <div class="a btn" style="left:477px;top:472px;width:91px;height:26px;border:2px solid #0078d7;box-shadow:inset 0 0 0 1px #f2faff"></div>
  <div class="a lbl" style="left:477px;top:477px;width:91px;text-align:center">Export</div>
</div>
</body></html>
